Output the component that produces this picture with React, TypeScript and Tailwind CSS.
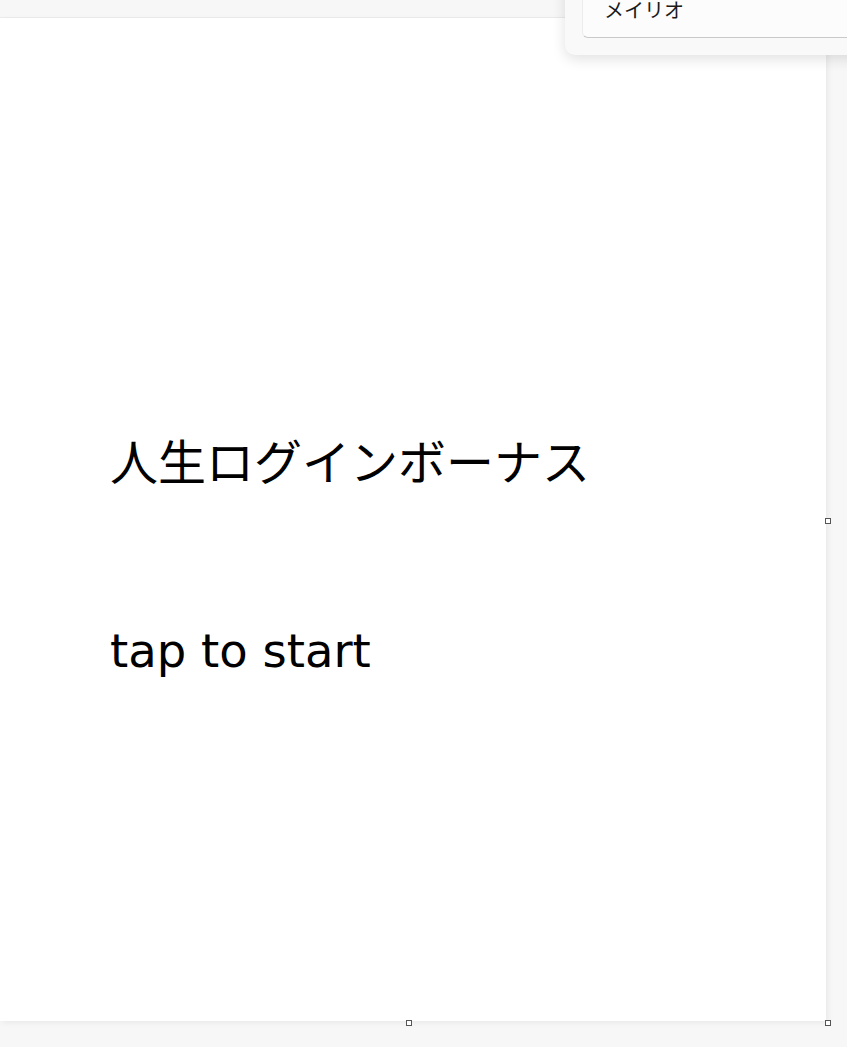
import React from "react"

const Handle = ({ className }: { className: string }) => (
  <div className={`absolute w-[6px] h-[6px] border border-[#555] bg-white ${className}`} />
)

export default function App() {
  return (
    <div className="relative w-[847px] h-[1047px] overflow-hidden bg-[#f7f7f7] font-['DejaVu_Sans','Noto_Sans_CJK_JP',sans-serif]">
      {/* top strip */}
      <div className="h-[18px] border-b border-[#ececec]" />

      {/* page canvas */}
      <div className="flex">
        <div className="w-[826px] h-[1003px] bg-white shadow-[2px_2px_6px_rgba(0,0,0,0.06)] pl-[110px] pt-[413px] text-black">
          <div className="text-[48px] leading-[56px] font-['Noto_Sans_CJK_JP',sans-serif]">
            人生ログインボーナス
          </div>
          <div className="mt-[136px] text-[46.5px] leading-[56px]">tap to start</div>
        </div>
      </div>

      {/* selection handles */}
      <Handle className="left-[825px] top-[518px]" />
      <Handle className="left-[406px] top-[1020px]" />
      <Handle className="left-[825px] top-[1020px]" />

      {/* font picker popup */}
      <div className="absolute left-[565px] top-[-20px] w-[300px] h-[75px] bg-[#f9f9f9] rounded-bl-[10px] shadow-[0_4px_14px_rgba(0,0,0,0.12)] pl-[17px]">
        <div className="h-[58px] bg-[#fcfcfc] rounded-bl-[6px] border border-[#ececec] border-b-[#c9c9c9] pl-[21px] pt-[15px] text-[20px] leading-[28px] text-[#1a1a1a] font-['Noto_Sans_CJK_JP',sans-serif]">
          メイリオ
        </div>
      </div>
    </div>
  )
}
